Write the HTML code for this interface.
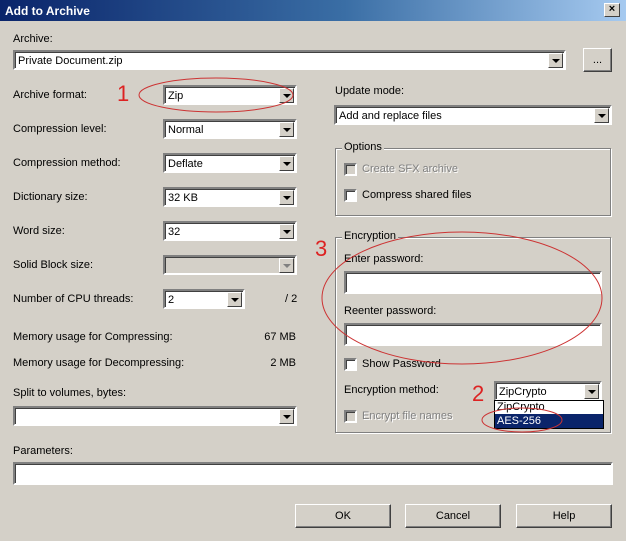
<!DOCTYPE html><html><head><style>
*{box-sizing:border-box}
body{margin:0;width:626px;height:541px;background:#d4d0c8;font-family:"Liberation Sans",sans-serif;font-size:11px;color:#000;position:relative;overflow:hidden}
.a{position:absolute;white-space:nowrap}
.tb{position:absolute;left:0;top:0;width:626px;height:21px;background:linear-gradient(90deg,#0a246a,#3a6ea5 55%,#a6caf0);color:#fff;font-weight:bold;font-size:12px;padding:4px 5px}
.cl{position:absolute;left:604px;top:3px;width:16px;height:14px;background:#d4d0c8;border:1px solid;border-color:#fff #404040 #404040 #fff;font-size:11px;line-height:11px;text-align:center;color:#000;font-weight:bold}
.cb{position:absolute;background:#fff;border:2px solid;border-color:#808080 #fff #fff #808080;box-shadow:inset 1px 1px 0 #404040;height:20px;padding:3px 3px;font-size:11px}
.cb .ar{position:absolute;right:1px;top:1px;width:15px;height:15px;background:#d4d0c8;border:1px solid;border-color:#fff #404040 #404040 #fff}
.cb .ar:after{content:"";position:absolute;left:3px;top:5px;border-left:4px solid transparent;border-right:4px solid transparent;border-top:4px solid #000}
.dis{background:#d4d0c8}
.dis .ar:after{border-top-color:#808080}
.btn{position:absolute;background:#d4d0c8;border:1px solid;border-color:#fff #404040 #404040 #fff;box-shadow:inset -1px -1px 0 #808080;text-align:center;line-height:22px;height:24px}
.gb{position:absolute;border:1px solid #808080;box-shadow:1px 1px 0 #fff,inset 1px 1px 0 #fff}
.gl{position:absolute;background:#d4d0c8;padding:0 2px;top:-8px;left:6px}
.ck{position:absolute;width:13px;height:13px;background:#fff;border:2px solid;border-color:#808080 #fff #fff #808080;box-shadow:inset 1px 1px 0 #404040}
.ck.d{background:#d4d0c8}
.g{color:#808080;text-shadow:1px 1px 0 #fff}
.red{position:absolute;color:#d22;font-size:22px}
</style></head><body>
<div class="tb">Add to Archive</div><div class="cl">×</div>
<div class="a" style="left:13px;top:33px">Archive:</div>
<div class="cb" style="left:13px;top:50px;width:553px">Private Document.zip<div class="ar"></div></div>
<div class="btn" style="left:583px;top:48px;width:29px;">...</div>
<div class="a" style="left:13px;top:89px">Archive format:</div>
<div class="red" style="left:117px;top:81px">1</div>
<div class="cb" style="left:163px;top:85px;width:134px">Zip<div class="ar"></div></div>
<div class="a" style="left:13px;top:123px">Compression level:</div>
<div class="cb" style="left:163px;top:119px;width:134px">Normal<div class="ar"></div></div>
<div class="a" style="left:13px;top:157px">Compression method:</div>
<div class="cb" style="left:163px;top:153px;width:134px">Deflate<div class="ar"></div></div>
<div class="a" style="left:13px;top:191px">Dictionary size:</div>
<div class="cb" style="left:163px;top:187px;width:134px">32 KB<div class="ar"></div></div>
<div class="a" style="left:13px;top:225px">Word size:</div>
<div class="cb" style="left:163px;top:221px;width:134px">32<div class="ar"></div></div>
<div class="a" style="left:13px;top:259px">Solid Block size:</div>
<div class="cb dis" style="left:163px;top:255px;width:134px"><div class="ar"></div></div>
<div class="a" style="left:13px;top:293px">Number of CPU threads:</div>
<div class="cb" style="left:163px;top:289px;width:82px">2<div class="ar"></div></div>
<div class="a" style="left:285px;top:293px">/ 2</div>
<div class="a" style="left:13px;top:331px">Memory usage for Compressing:</div>
<div class="a" style="right:330px;top:331px">67 MB</div>
<div class="a" style="left:13px;top:357px">Memory usage for Decompressing:</div>
<div class="a" style="right:330px;top:357px">2 MB</div>
<div class="a" style="left:13px;top:387px">Split to volumes, bytes:</div>
<div class="cb" style="left:13px;top:406px;width:284px"><div class="ar"></div></div>
<div class="a" style="left:13px;top:445px">Parameters:</div>
<div class="cb" style="left:13px;top:462px;width:600px;height:23px"></div>
<div class="btn" style="left:295px;top:504px;width:96px">OK</div>
<div class="btn" style="left:405px;top:504px;width:96px">Cancel</div>
<div class="btn" style="left:516px;top:504px;width:96px">Help</div>

<div class="a" style="left:335px;top:85px">Update mode:</div>
<div class="cb" style="left:334px;top:105px;width:278px">Add and replace files<div class="ar"></div></div>
<div class="gb" style="left:335px;top:148px;width:276px;height:68px"><div class="gl">Options</div></div>
<div class="ck d" style="left:344px;top:163px"></div><div class="a g" style="left:362px;top:163px">Create SFX archive</div>
<div class="ck" style="left:344px;top:189px"></div><div class="a" style="left:362px;top:189px">Compress shared files</div>
<div class="gb" style="left:335px;top:237px;width:276px;height:196px"><div class="gl">Encryption</div></div>
<div class="red" style="left:315px;top:236px">3</div>
<div class="a" style="left:344px;top:253px">Enter password:</div>
<div class="cb" style="left:344px;top:271px;width:258px;height:23px"></div>
<div class="a" style="left:344px;top:305px">Reenter password:</div>
<div class="cb" style="left:344px;top:323px;width:258px;height:23px"></div>
<div class="ck" style="left:344px;top:358px"></div><div class="a" style="left:362px;top:358px">Show Password</div>
<div class="a" style="left:344px;top:384px">Encryption method:</div>
<div class="red" style="left:472px;top:381px">2</div>
<div class="cb" style="left:494px;top:381px;width:108px">ZipCrypto<div class="ar"></div></div>
<div class="ck d" style="left:344px;top:410px"></div><div class="a g" style="left:362px;top:410px">Encrypt file names</div>
<div class="a" style="left:494px;top:400px;width:110px;height:29px;background:#fff;border:1px solid #000">
<div style="height:13px;padding-left:2px;line-height:13px">ZipCrypto</div>
<div style="height:14px;padding-left:2px;line-height:14px;background:#0a246a;color:#fff">AES-256</div></div>
<svg class="a" style="left:0;top:0" width="626" height="541"><g fill="none" stroke="#c33" stroke-width="1">
<ellipse cx="216" cy="95" rx="77" ry="17"/><ellipse cx="462" cy="298" rx="140" ry="66"/><ellipse cx="522" cy="420" rx="40" ry="12"/></g></svg>
</body></html>
